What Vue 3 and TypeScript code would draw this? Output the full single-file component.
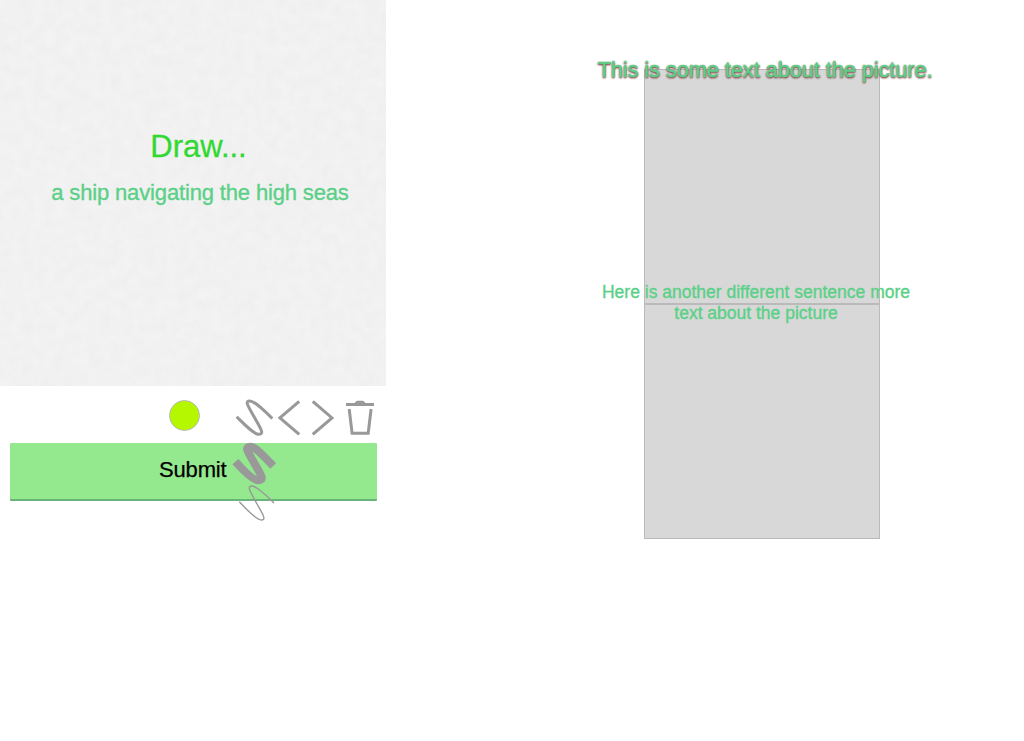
<script setup lang="ts">
import { ref } from 'vue'

interface Stroke {
  name: string
  width: number
  path: string
}

const prompt = ref('a ship navigating the high seas')
const strokes: Stroke[] = [
  { name: 'medium', width: 3, path: 'M6.6 17.7 C15 26 24 35.3 28.5 35.3 C35 35.3 30.5 29.5 24.5 18.5 C18.5 7.5 14.2 1.9 19.8 1.9 C24.5 1.9 34 11.5 42.4 19.5' },
  { name: 'thick', width: 8, path: 'M5.4 62.6 C13 71 23.5 81.2 28 81.2 C35.5 81.2 30.5 75.5 24.5 64.5 C18.5 53.5 13.5 47.8 20.5 47.8 C25.5 47.8 35 58.5 43.2 67' },
  { name: 'thin', width: 1.4, path: 'M9.3 102.8 C17 111 26.5 121 31.2 121 C37 121 32.5 115 26.5 104 C20.5 93 16.3 87 21.8 87 C26.5 87 36 96 44 104' },
]
</script>

<template>
  <main class="app">
    <section class="editor">
      <div class="canvas">
        <svg class="paper" width="386" height="386" aria-hidden="true">
          <filter id="grain" x="0" y="0" width="100%" height="100%" color-interpolation-filters="sRGB">
            <feTurbulence type="fractalNoise" baseFrequency=".09" numOctaves="4" seed="4" />
            <feColorMatrix values=".026 0 0 0 .932 .026 0 0 0 .932 .026 0 0 0 .932 0 0 0 0 1" />
          </filter>
          <rect width="386" height="386" filter="url(#grain)" />
        </svg>
        <h1 class="heading">Draw...</h1>
        <p class="prompt">{{ prompt }}</p>
      </div>
      <div class="tools">
        <button class="swatch" aria-label="Color"></button>
        <div class="brush">
          <svg class="strokes" width="50" height="124" viewBox="0 0 50 124">
            <path v-for="s in strokes" :key="s.name" :d="s.path" :stroke-width="s.width" />
          </svg>
        </div>
        <svg class="icon" width="22" height="38" viewBox="0 0 22 38">
          <path d="M21.2 2.4 L1.9 18.9 L21.2 35.4" />
        </svg>
        <svg class="icon next" width="22" height="38" viewBox="0 0 22 38">
          <path d="M.8 2.4 L20 18.9 L.8 35.4" />
        </svg>
        <svg class="icon trash" width="28" height="38" viewBox="0 0 28 38">
          <path d="M0 5.6H28M3.2 10L6.1 34.3H22.2L25.1 10" />
          <path class="lid" d="M9 4.8V3.2L11 1.7H17L19 3.2V4.8Z" />
        </svg>
      </div>
      <button class="submit">Submit</button>
    </section>

    <section class="gallery">
      <div class="picture"><p class="caption shadowed">This is some text about the picture.</p></div>
      <div class="picture"><p class="caption small">Here is another different sentence more<br />text about the picture</p></div>
    </section>
  </main>
</template>

<style>
body { margin: 0; background: #fff; }
</style>

<style scoped>
.app {
  display: flex;
  height: 741px;
  overflow: hidden;
  font-family: "Liberation Sans", Arial, sans-serif;
}
.editor { width: 386px; }
.canvas {
  position: relative;
  box-sizing: border-box;
  height: 386px;
  padding: 129px 0 0 11px;
  text-align: center;
}
.paper { position: absolute; left: 0; top: 0; }
.heading {
  position: relative;
  margin: 0;
  font-size: 31px;
  line-height: 36px;
  font-weight: 400;
  color: #32d832;
  -webkit-text-stroke: .3px #32d832;
}
.prompt {
  position: relative;
  margin: 15px 0 0 3px;
  font-size: 22px;
  line-height: 26px;
  letter-spacing: -.15px;
  white-space: nowrap;
  color: #5bd087;
  -webkit-text-stroke: .35px #5bd087;
}
.tools {
  display: flex;
  height: 57px;
  box-sizing: border-box;
  padding: 13px 0 0 169px;
}
.swatch {
  box-sizing: border-box;
  width: 31px;
  height: 31px;
  margin-top: 1px;
  padding: 0;
  border: 1.5px solid #bababa;
  border-radius: 50%;
  background: #b5f700;
}
.brush { position: relative; width: 50px; margin-left: 30px; }
.strokes {
  position: absolute;
  left: 0;
  top: 0;
  z-index: 1;
  overflow: visible;
  fill: none;
  stroke: #999;
}
.icon {
  margin-left: -2px;
  fill: none;
  stroke: #999;
  stroke-width: 3;
}
.icon.next { margin-left: 12px; }
.icon.trash { margin-left: 12px; }
.icon .lid { fill: #999; stroke: none; }
.submit {
  display: block;
  box-sizing: border-box;
  width: 366.5px;
  height: 58px;
  margin-left: 10px;
  padding: 0 1px 3px 0;
  border: 0;
  border-bottom: 2px solid #68b47b;
  border-radius: 1px;
  background: #94e98f;
  font: 22px/26px "Liberation Sans", Arial, sans-serif;
  letter-spacing: -.15px;
  color: #000;
  -webkit-text-stroke: .25px #000;
}
.gallery { margin: 69px 0 0 258px; }
.picture {
  display: flex;
  justify-content: center;
  box-sizing: border-box;
  width: 236px;
  height: 235px;
  border: 1px solid #bababa;
  background: #d8d8d8;
}
.caption {
  position: relative;
  flex: none;
  margin: -13px 0 0 6px;
  text-align: center;
  white-space: nowrap;
  color: #5bd087;
  -webkit-text-stroke: .35px #5bd087;
}
.shadowed {
  font-size: 22px;
  line-height: 26px;
  letter-spacing: -.17px;
  text-shadow: 0 1px 2px #744, 0 1px 2px #966;
}
.small {
  margin: -23px 0 0 -12px;
  font-size: 17.5px;
  line-height: 21px;
}
</style>
